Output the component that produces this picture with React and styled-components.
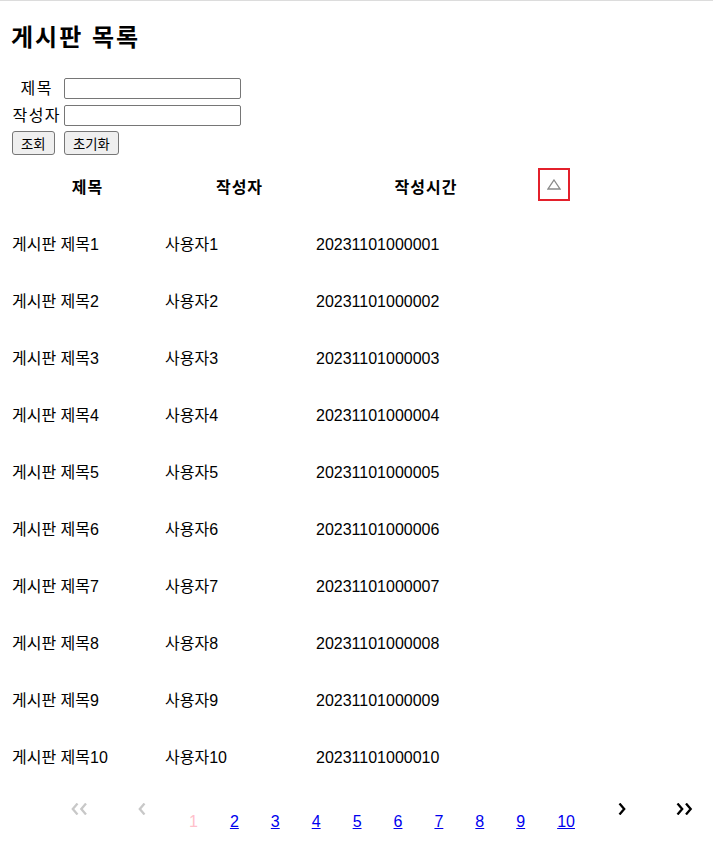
import React from "react";
import styled, { createGlobalStyle } from "styled-components";

const Global = createGlobalStyle`
  html, body { margin: 0; padding: 0; background: #fff; }
  body {
    font-family: "Liberation Sans", "Noto Sans CJK KR", sans-serif;
    font-size: 16px;
    color: #000;
  }
`;

const Page = styled.div`
  border-top: 1px solid #dcdcdc;
  padding: 0 12px 20px 12px;
`;

const Title = styled.h2`
  margin: 20px 0 0 -1px;
  font-size: 24px;
  line-height: 34px;
  font-weight: 700;
  letter-spacing: 2px;
`;

const SearchForm = styled.form`
  margin-top: 22px;
  display: grid;
  grid-template-columns: 48px 177px;
  grid-template-rows: 23px 23px 24px;
  column-gap: 4px;
  row-gap: 4px;
  align-items: center;
`;

const Label = styled.label`
  text-align: center;
  font-size: 16px;
  line-height: 23px;
  letter-spacing: 1.5px;
  margin-right: -1.5px;
`;

const TextInput = styled.input`
  box-sizing: border-box;
  width: 177px;
  height: 21px;
  border: 1px solid #767676;
  border-radius: 2px;
  padding: 1px 2px;
  font-size: 13px;
`;

const Button = styled.button`
  justify-self: start;
  box-sizing: border-box;
  height: 24px;
  padding: 0 8px;
  background: #efefef;
  border: 1px solid #767676;
  border-radius: 3px;
  font-family: "Liberation Sans", "Noto Sans CJK KR", sans-serif;
  font-size: 13.33px;
  color: #000;
`;

const Table = styled.div`
  margin-top: 3px;
  display: grid;
  grid-template-columns: 153px 151px 222px 32px;
  grid-auto-rows: 57px;
  align-items: center;
`;

const HeadCell = styled.div`
  font-weight: 700;
  text-align: center;
  line-height: 22px;
  letter-spacing: 1px;
  position: relative;
  top: 1px;
  left: -1px;
`;

const Cell = styled.div`
  line-height: 22px;
  white-space: nowrap;
  position: relative;
  top: 1px;
`;

const SortButton = styled.button`
  box-sizing: border-box;
  width: 32px;
  height: 33px;
  padding: 0;
  background: #fff;
  border: 2px solid #e3202b;
  display: flex;
  align-items: center;
  justify-content: center;
  position: relative;
  top: -2px;
`;

const Pagination = styled.nav`
  display: flex;
  align-items: flex-start;
  padding-top: 18px;
  margin-left: 34px;
`;

const ArrowLink = styled.span`
  display: flex;
  padding: 0 25px;
  color: ${(p) => (p.$disabled ? "#c8c8c8" : "#000")};
`;

const Numbers = styled.div`
  display: flex;
  margin-left: 2px;
  margin-right: 2px;
  margin-top: 8px;
`;

const PageLink = styled.a`
  padding: 0 16px;
  font-size: 16px;
  line-height: 22px;
  color: ${(p) => (p.$active ? "pink" : "#0000ee")};
  text-decoration: ${(p) => (p.$active ? "none" : "underline")};
`;

const Chevron = ({ dir, double }) => {
  const w = double ? 17 : 8;
  const pts = (x) =>
    dir === "left"
      ? `${x + 6.5},0.5 ${x + 1.8},6 ${x + 6.5},11.5`
      : `${x + 1.5},0.5 ${x + 6.2},6 ${x + 1.5},11.5`;
  return (
    <svg width={w} height="12" viewBox={`0 0 ${w} 12`}>
      <polyline points={pts(0)} fill="none" stroke="currentColor" strokeWidth="2.3" />
      {double && (
        <polyline points={pts(8.5)} fill="none" stroke="currentColor" strokeWidth="2.3" />
      )}
    </svg>
  );
};

const rows = Array.from({ length: 10 }, (_, i) => ({
  title: `게시판 제목${i + 1}`,
  writer: `사용자${i + 1}`,
  time: `202311010000${String(i + 1).padStart(2, "0")}`,
}));

export default function App() {
  return (
    <Page>
      <Global />
      <Title>게시판 목록</Title>
      <SearchForm onSubmit={(e) => e.preventDefault()}>
        <Label>제목</Label>
        <TextInput type="text" />
        <Label>작성자</Label>
        <TextInput type="text" />
        <Button type="button">조회</Button>
        <Button type="button">초기화</Button>
      </SearchForm>
      <Table>
        <HeadCell>제목</HeadCell>
        <HeadCell>작성자</HeadCell>
        <HeadCell>작성시간</HeadCell>
        <SortButton type="button">
          <svg width="14" height="11" viewBox="0 0 14 11">
            <polygon points="7,1 13,10 1,10" fill="none" stroke="#8a8a8a" strokeWidth="1.3" />
          </svg>
        </SortButton>
        {rows.map((r) => (
          <React.Fragment key={r.time}>
            <Cell>{r.title}</Cell>
            <Cell>{r.writer}</Cell>
            <Cell>{r.time}</Cell>
            <Cell />
          </React.Fragment>
        ))}
      </Table>
      <Pagination>
        <ArrowLink $disabled>
          <Chevron dir="left" double />
        </ArrowLink>
        <ArrowLink $disabled>
          <Chevron dir="left" />
        </ArrowLink>
        <Numbers>
          {Array.from({ length: 10 }, (_, i) => (
            <PageLink key={i} href="#" $active={i === 0} onClick={(e) => e.preventDefault()}>
              {i + 1}
            </PageLink>
          ))}
        </Numbers>
        <ArrowLink>
          <Chevron dir="right" />
        </ArrowLink>
        <ArrowLink>
          <Chevron dir="right" double />
        </ArrowLink>
      </Pagination>
    </Page>
  );
}
